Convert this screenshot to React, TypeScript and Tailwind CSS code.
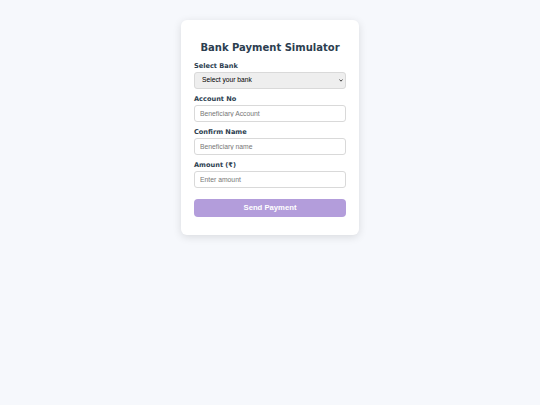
import React from 'react';

const inputFont = { fontFamily: '"Liberation Sans", Arial, sans-serif' };

const Label: React.FC<{ children: React.ReactNode }> = ({ children }) => (
  <label className="block text-[6.6px] font-bold text-[#2c3e50] leading-[8px] mb-[2px]">{children}</label>
);

const Field: React.FC<{ placeholder: string; last?: boolean }> = ({ placeholder, last }) => (
  <input
    className={`block w-full h-[17px] rounded-[3px] bg-white border border-[#d9d9d9] text-[6.8px] px-[5px] outline-none placeholder:text-[#777777] ${last ? 'mb-[11px]' : 'mb-[6px]'}`}
    placeholder={placeholder}
    style={inputFont}
  />
);

export default function App() {
  return (
    <div className="min-h-[405px] w-full bg-[#f6f8fc] flex justify-center" style={{ fontFamily: '"DejaVu Sans", Verdana, sans-serif' }}>
      <div className="mt-[20px] self-start w-[178px] bg-white rounded-[6px] shadow-[0_2px_8px_rgba(0,0,0,0.12)] px-[13px] pt-[22px] pb-[18px]">
        <h2 className="text-center text-[10px] font-bold text-[#2c3e50] leading-[12px] mb-[8px] whitespace-nowrap">Bank Payment Simulator</h2>

        <Label>Select Bank</Label>
        <div className="relative mb-[6px]">
          <select className="block w-full h-[17px] appearance-none rounded-[3px] bg-[#eeeeee] border border-[#d9d9d9] text-[6.7px] text-black pl-[7px] outline-none" style={inputFont}>
            <option>Select your bank</option>
          </select>
          <svg className="absolute right-[3px] top-[7px] w-[4px] h-[3px] pointer-events-none" viewBox="0 0 4 3">
            <path d="M0.5 0.5 L2 2.2 L3.5 0.5" fill="none" stroke="#333" strokeWidth="0.9" />
          </svg>
        </div>

        <Label>Account No</Label>
        <Field placeholder="Beneficiary Account" />

        <Label>Confirm Name</Label>
        <Field placeholder="Beneficiary name" />

        <Label>Amount (₹)</Label>
        <Field placeholder="Enter amount" last />

        <button className="block w-full h-[18px] rounded-[4px] bg-[#b39ddb] text-white text-[7.7px] font-bold" style={inputFont}>Send Payment</button>
      </div>
    </div>
  );
}
